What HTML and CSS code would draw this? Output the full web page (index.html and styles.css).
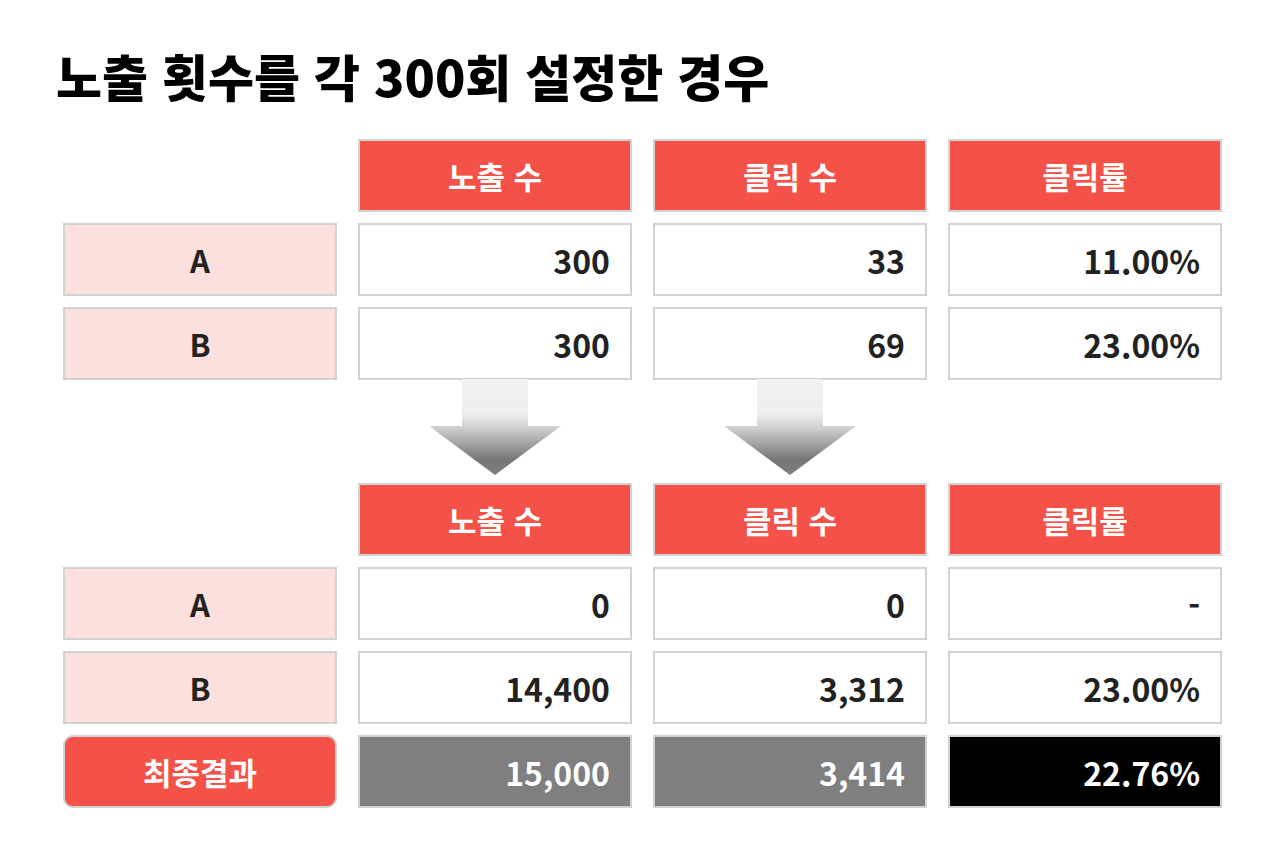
FILE: index.html
```html
<!DOCTYPE html>
<html lang="ko">
<head>
<meta charset="utf-8">
<title>노출 횟수를 각 300회 설정한 경우</title>
<link rel="stylesheet" href="styles.css">
</head>
<body>
<main class="page">
  <h1 class="title">노출 횟수를 각 300회 설정한 경우</h1>

  <section class="grid">
    <div class="blank"></div>
    <div class="cell head">노출 수</div>
    <div class="cell head">클릭 수</div>
    <div class="cell head">클릭률</div>

    <div class="cell label">A</div>
    <div class="cell num">300</div>
    <div class="cell num">33</div>
    <div class="cell num">11.00%</div>

    <div class="cell label">B</div>
    <div class="cell num">300</div>
    <div class="cell num">69</div>
    <div class="cell num">23.00%</div>
  </section>

  <div class="arrows">
    <div></div>
    <div class="arrow-slot">
      <svg class="arrow" width="132" height="97" viewBox="0 0 132 97">
        <defs>
          <linearGradient id="ag1" x1="0" y1="0" x2="0" y2="1">
            <stop offset="0" stop-color="#f2f2f2"/>
            <stop offset="0.36" stop-color="#eeeeee"/>
            <stop offset="0.5" stop-color="#d2d2d2"/>
            <stop offset="0.84" stop-color="#767676"/>
            <stop offset="1" stop-color="#808080"/>
          </linearGradient>
        </defs>
        <path d="M33 0 H99 V47 H132 L66 96 L0 47 H33 Z" fill="url(#ag1)"/>
      </svg>
    </div>
    <div class="arrow-slot">
      <svg class="arrow" width="132" height="97" viewBox="0 0 132 97">
        <defs>
          <linearGradient id="ag2" x1="0" y1="0" x2="0" y2="1">
            <stop offset="0" stop-color="#f2f2f2"/>
            <stop offset="0.36" stop-color="#eeeeee"/>
            <stop offset="0.5" stop-color="#d2d2d2"/>
            <stop offset="0.84" stop-color="#767676"/>
            <stop offset="1" stop-color="#808080"/>
          </linearGradient>
        </defs>
        <path d="M33 0 H99 V47 H132 L66 96 L0 47 H33 Z" fill="url(#ag2)"/>
      </svg>
    </div>
    <div></div>
  </div>

  <section class="grid">
    <div class="blank"></div>
    <div class="cell head">노출 수</div>
    <div class="cell head">클릭 수</div>
    <div class="cell head">클릭률</div>

    <div class="cell label">A</div>
    <div class="cell num">0</div>
    <div class="cell num">0</div>
    <div class="cell num">-</div>

    <div class="cell label">B</div>
    <div class="cell num">14,400</div>
    <div class="cell num">3,312</div>
    <div class="cell num">23.00%</div>

    <div class="cell result">최종결과</div>
    <div class="cell num total">15,000</div>
    <div class="cell num total">3,414</div>
    <div class="cell num rate">22.76%</div>
  </section>
</main>
</body>
</html>
```

FILE: styles.css
```css
* {
  box-sizing: border-box;
}

html, body {
  margin: 0;
  padding: 0;
  background: #ffffff;
}

body {
  font-family: "Noto Sans CJK KR", "Noto Sans", sans-serif;
  font-weight: 700;
  color: #222222;
}

.page {
  width: 1280px;
  height: 855px;
  padding: 45px 58px 0 63px;
  overflow: hidden;
}

.title {
  margin: 0 0 34px -7px;
  font-size: 50px;
  line-height: 60px;
  font-weight: 900;
  color: #000000;
  letter-spacing: 0;
  white-space: nowrap;
}

.grid {
  display: grid;
  grid-template-columns: repeat(4, 274px);
  grid-auto-rows: 73px;
  column-gap: 21px;
  row-gap: 11px;
}

.cell {
  display: flex;
  align-items: center;
  border: 2px solid #d2d2d2;
  background: #ffffff;
  font-size: 32px;
  line-height: 1;
}

.head {
  justify-content: center;
  background: #f45148;
  color: #ffffff;
  font-size: 31px;
}

.label {
  justify-content: center;
  background: #fce0de;
  color: #222222;
  font-size: 31px;
}

.num {
  justify-content: flex-end;
  padding-right: 20px;
  color: #222222;
}

.total {
  background: #7f7f7f;
  color: #ffffff;
}

.rate {
  background: #000000;
  color: #ffffff;
}

.result {
  justify-content: center;
  background: #f45148;
  color: #ffffff;
  border-radius: 10px;
  font-size: 31px;
}

.arrows {
  display: grid;
  grid-template-columns: repeat(4, 274px);
  column-gap: 21px;
  height: 104px;
  margin-top: -1px;
}

.arrow-slot {
  display: flex;
  justify-content: center;
  align-items: flex-start;
}

.arrow {
  display: block;
}
```
